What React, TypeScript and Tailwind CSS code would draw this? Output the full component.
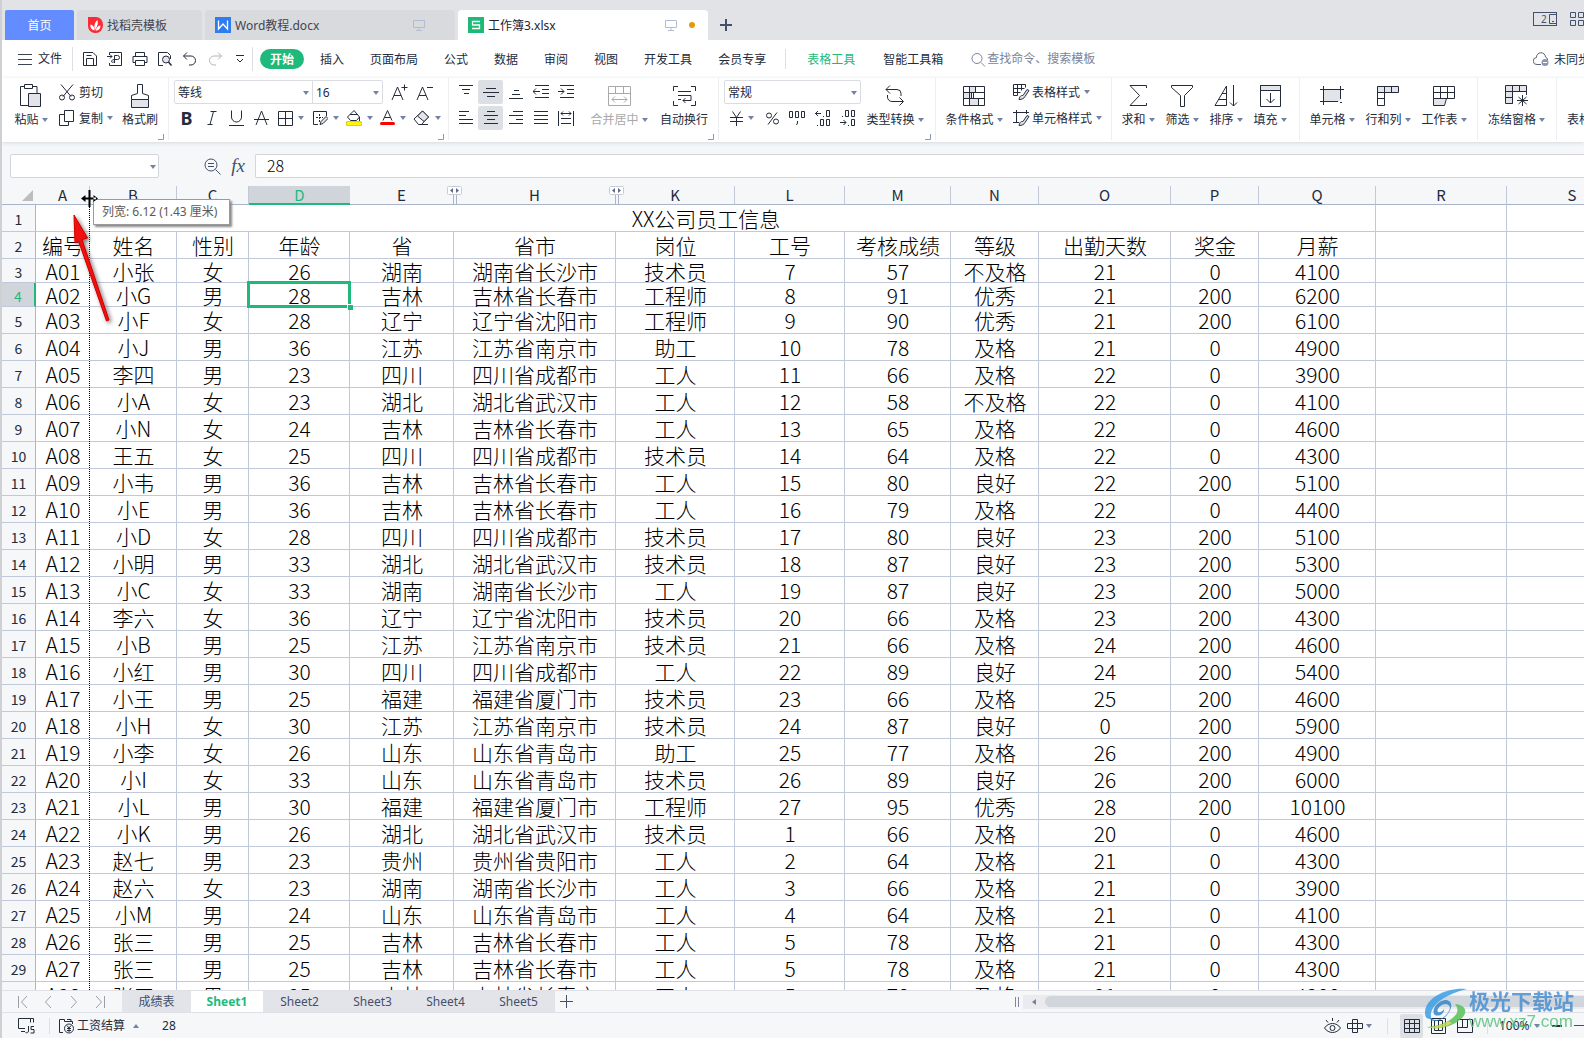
import type { ReactNode } from 'react'

type IconProps = { w: number; h: number; className?: string; children: ReactNode }

function Icon({ w, h, className = '', children }: IconProps) {
  return (
    <svg
      width={w}
      height={h}
      viewBox={`0 0 ${w} ${h}`}
      fill="none"
      stroke="currentColor"
      className={`shrink-0 ${className}`}
      aria-hidden="true"
    >
      {children}
    </svg>
  )
}

function Caret({ className = '' }: { className?: string }) {
  return (
    <svg width="6" height="4" viewBox="0 0 6 4" className={`shrink-0 ${className}`} aria-hidden="true">
      <path d="M0 0h6L3 4z" fill="#7483a3" />
    </svg>
  )
}

function Group({ className, corner, children }: { className: string; corner?: boolean; children: ReactNode }) {
  return (
    <div className={`relative flex h-[62px] shrink-0 border-r border-[#eceef1] ${className}`}>
      {children}
      {corner && (
        <Icon w={6} h={6} className="absolute right-1 bottom-0 text-[#8b97b3]">
          <path d="M5.5 0v5.5H0" />
        </Icon>
      )}
    </div>
  )
}

type BigProps = { label: string; icon: ReactNode; className: string; caret?: boolean; muted?: boolean }

function BigButton({ label, icon, className, caret = true, muted }: BigProps) {
  return (
    <button className={`flex shrink-0 flex-col items-center pt-[5px] ${muted ? 'text-[#a9a9a9]' : ''} ${className}`}>
      <span className="flex h-[25px] items-center">{icon}</span>
      <span className="mt-1 flex h-4 items-center gap-[3px] whitespace-nowrap">
        {label}
        {caret && <Caret />}
      </span>
    </button>
  )
}

function Tool({ label, className = 'w-[25px]', active, caret, children }: {
  label: string
  className?: string
  active?: boolean
  caret?: boolean
  children: ReactNode
}) {
  return (
    <button
      aria-label={label}
      className={`flex h-6 shrink-0 items-center justify-center gap-[5px] rounded-xs ${active ? 'bg-[#dce0e5]' : ''} ${className}`}
    >
      {children}
      {caret && <Caret />}
    </button>
  )
}

function Monitor() {
  return (
    <Icon w={12} h={12} className="text-[#b4bcd4]">
      <path d="M.5 1.5h11v7H.5zM6 8.500v3M3 11.500h6" />
    </Icon>
  )
}

function Divider({ className = '' }: { className?: string }) {
  return <span className={`w-px shrink-0 bg-[#dcdfe4] ${className}`} />
}

function TitleBar() {
  return (
    <header className="flex h-10 shrink-0 items-end bg-[#e1e3e7] pl-[3px]">
      <button className="h-[30px] w-[69px] shrink-0 rounded-t-xs bg-[#628cff] pt-[2px] text-white">首页</button>
      <button className="ml-[3px] flex h-[30px] w-[125px] shrink-0 items-center rounded-t-sm bg-[#d9dade] pl-[11px] text-[#41454f]">
        <svg width="15" height="16" viewBox="0 0 15 16" className="mr-1" aria-hidden="true">
          <path d="M0 0h8a7 8 0 0 1 0 16h-1A7 7 0 0 1 0 9z" fill="#fb2a35" />
          <path
            d="M6.500 13.500C3 12.500 2 10 2.500 7.500c2 .5 3 1.500 3.500 3zM7 13c-1.500-4 0-8 2.500-10 1 3 0 6-2.500 10zM7.500 13.500c1-3 2.500-5 5-5 0 3-1.500 5-5 5z"
            fill="#fff"
          />
        </svg>
        <span className="pt-[2px]">找稻壳模板</span>
      </button>
      <button className="ml-[3px] flex h-[30px] w-[250px] shrink-0 items-center rounded-t-sm bg-[#d9dade] pl-[10px] text-[#41454f]">
        <svg width="16" height="16" viewBox="0 0 16 16" className="mr-1" aria-hidden="true">
          <path d="M0 0h16v16H0z" fill="#2f7cf0" />
          <path d="M3.500 3.500v8.500L8 7l4.500 5V3.500" fill="none" stroke="#fff" strokeWidth="1.300" />
        </svg>
        <span className="pt-[2px]">Word教程.docx</span>
        <span className="mr-[30px] ml-auto">
          <Monitor />
        </span>
      </button>
      <button className="ml-[3px] flex h-[30px] w-[250px] shrink-0 items-center rounded-t-sm bg-white pl-[10px] text-[#1c2330]">
        <svg width="16" height="16" viewBox="0 0 16 16" className="mr-1" aria-hidden="true">
          <path d="M0 0h16v16H0z" fill="#1db977" />
          <path d="M12 4.500H4.500V8h7v3.500H4" fill="none" stroke="#fff" strokeWidth="1.300" />
        </svg>
        <span className="pt-[2px]">工作簿3.xlsx</span>
        <span className="ml-auto">
          <Monitor />
        </span>
        <span className="mr-[13px] ml-3 size-[6px] rounded-full bg-[#e59a0c]" />
      </button>
      <button aria-label="新建标签" className="ml-3 flex h-[30px] items-center text-[#44506b]">
        <Icon w={12} h={12}>
          <path d="M6 0v12M0 6h12" strokeWidth="2" />
        </Icon>
      </button>
      <div className="ml-auto flex h-7 w-[51px] items-start gap-[13px] overflow-hidden text-[#44506b]">
        <span className="flex h-[14px] w-6 shrink-0 items-center justify-between border border-[#44506b] pl-[7px] text-[10px]">
          2
          <Icon w={8} h={12}>
            <path d="M8 1.500H1.500v9H8M4 8.500h2" />
          </Icon>
        </span>
        <Icon w={16} h={14}>
          <path d="M.5.5h5v5h-5zM8.500.5h5v5h-5zM.5 8.500h5v5h-5zM8.500 8.500h5v5h-5z" />
        </Icon>
      </div>
    </header>
  )
}

const menus = ['插入', '页面布局', '公式', '数据', '审阅', '视图', '开发工具', '会员专享']

function MenuBar() {
  return (
    <nav className="flex h-[38px] shrink-0 items-center bg-white pl-4 text-[#242b3a]">
      <button className="flex items-center gap-[6px]">
        <Icon w={14} h={11} className="text-[#3c4454]">
          <path d="M0 .5h14M0 5.500h14M0 10.500h14" />
        </Icon>
        文件
      </button>
      <Divider className="ml-[10px] h-6" />
      <div className="ml-1 flex">
        <Tool label="保存">
          <Icon w={16} h={16}>
            <path d="M1.500 1.500h9.500l3.500 3.500v9.500h-13zM4.500 14.500v-7h7v7M4.500 4.500h5" />
          </Icon>
        </Tool>
        <Tool label="输出为PDF">
          <Icon w={16} h={16}>
            <path d="M2.500 4V1.500h12v13h-12V12M0 5.500h5M3 3.500l2 2-2 2M7.500 12V4.500h3a2 2 0 0 1 0 4h-3M7.500 8.500c-2 0-3 1-3 2s2 1 3 0" />
          </Icon>
        </Tool>
        <Tool label="打印">
          <Icon w={16} h={16}>
            <path d="M3.500 5V1.500h9V5M3.500 11.500h-2.500v-6h14v6h-2.500M3.500 9.500h9v5h-9z" />
          </Icon>
        </Tool>
        <Tool label="打印预览">
          <Icon w={16} h={16}>
            <path d="M6 14.500H1.500v-13h9l3 3V8" />
            <circle cx="9" cy="8.500" r="3.500" fill="#e4e5ea" />
            <path d="M11.500 11l3 3.500" strokeWidth="1.500" />
          </Icon>
        </Tool>
        <Tool label="撤销">
          <Icon w={16} h={16}>
            <path d="M5 1.500l-3.500 3.500L5 8.500M1.500 5H9a4.500 4.500 0 0 1 0 9H7" />
          </Icon>
        </Tool>
        <Tool label="恢复">
          <Icon w={16} h={16} className="text-[#b5b5b5]">
            <path d="M11 1.500l3.500 3.500-3.500 3.500M14.500 5H7a4.500 4.500 0 0 0 0 9h2" />
          </Icon>
        </Tool>
        <Tool label="更多">
          <Icon w={8} h={8}>
            <path d="M0 .5h8M1 4l3 3 3-3" />
          </Icon>
        </Tool>
      </div>
      <Divider className="h-6" />
      <button className="ml-[7px] h-5 w-11 shrink-0 rounded-full bg-[#1fb97c] pt-px font-bold text-white">开始</button>
      <div className="ml-4 flex shrink-0 gap-[26px] pt-[2px]">
        {menus.map((name) => (
          <button key={name}>{name}</button>
        ))}
      </div>
      <Divider className="ml-[19px] h-5" />
      <button className="ml-[21px] shrink-0 pt-[2px] text-[#1fb97c]">表格工具</button>
      <button className="ml-7 shrink-0 pt-[2px]">智能工具箱</button>
      <label className="ml-7 flex flex-1 items-center gap-px text-[#7a849c]">
        <Icon w={15} h={15}>
          <circle cx="6" cy="6.500" r="5" />
          <path d="M10 10.500l4 4" />
        </Icon>
        <input
          aria-label="查找命令"
          placeholder="查找命令、搜索模板"
          className="w-[120px] bg-transparent outline-none placeholder:text-[#7a849c]"
        />
      </label>
      <button className="flex w-[51px] shrink-0 items-center gap-[5px] overflow-hidden whitespace-nowrap">
        <Icon w={16} h={14}>
          <path d="M8 12.500H4a3.500 3.500 0 0 1-.5-7 4.500 4.500 0 0 1 9-.5 3 3 0 0 1 2 3" stroke="#5b6479" />
          <circle cx="12" cy="10.500" r="3.500" fill="#8a96b2" stroke="none" />
          <path d="M10 10.500h4" stroke="#fff" />
        </Icon>
        <span className="pt-[2px]">未同步</span>
      </button>
    </nav>
  )
}

function FormatRow() {
  return (
    <div className="flex">
      <Tool label="加粗">
        <span className="font-['Noto_Sans'] text-[18px] font-bold">B</span>
      </Tool>
      <Tool label="倾斜">
        <Icon w={10} h={16}>
          <path d="M3.500 1.500h6M.5 14.500h5M6.500 1.500l-3.500 13" />
        </Icon>
      </Tool>
      <Tool label="下划线">
        <Icon w={15} h={16}>
          <path d="M2.500.5V7a5 5 0 0 0 10 0V.5M0 15.500h15" />
        </Icon>
      </Tool>
      <Tool label="删除线">
        <Icon w={15} h={16}>
          <path d="M2 15l5.500-14L13 15M0 9.500h15" />
        </Icon>
      </Tool>
      <Tool label="边框" className="w-[34px]" caret>
        <Icon w={15} h={15}>
          <path d="M.5.5h14v14H.5zM7.500.5v14M.5 7.500h14" />
        </Icon>
      </Tool>
      <Tool label="绘图边框" className="w-[34px]" caret>
        <Icon w={16} h={16}>
          <path d="M14.500 6V1.500H1.500v13H6" />
          <path d="M7.500 4v9M4 7.500h7" strokeDasharray="2 1" />
          <path d="M8 14.500l1-3 5-5 2 2-5 5z" fill="#e4e5ea" />
        </Icon>
      </Tool>
      <Tool label="填充颜色" className="w-[34px]" caret>
        <Icon w={16} h={16}>
          <path d="M1.500 7L8 .5 13.500 7 10.500 10.500h-6zM4 4.500h8M13.500 7v4" />
          <path d="M1.500 13.500h13" stroke="#8d8d20" strokeWidth="4" strokeLinecap="round" />
          <path d="M1.500 13.500h13" stroke="#fff600" strokeWidth="3" strokeLinecap="round" />
        </Icon>
      </Tool>
      <Tool label="字体颜色" className="w-[34px]" caret>
        <Icon w={15} h={16}>
          <path d="M3 10.500L7.500.5l4.500 10M4.500 7.500h6" />
          <path d="M1.500 13.500h12" stroke="#f00" strokeWidth="3" strokeLinecap="round" />
        </Icon>
      </Tool>
      <Tool label="清除" className="w-[34px]" caret>
        <Icon w={17} h={16}>
          <path d="M1 9l8.500-8 6 6-7 7.500H5.500zM7 14.500h8" />
          <path d="M4.500 6l5-5 6 6-4.500 4.500z" fill="#e4e5ea" />
        </Icon>
      </Tool>
    </div>
  )
}

function SelectBox({ label, value, className }: { label: string; value: string; className: string }) {
  return (
    <div className={`relative h-6 border border-[#d9dce1] bg-white ${className}`}>
      <select aria-label={label} className="h-full w-full appearance-none bg-transparent pt-px pl-[3px] outline-none">
        <option>{value}</option>
      </select>
      <Caret className="pointer-events-none absolute top-[10px] right-[3px]" />
    </div>
  )
}

function Ribbon() {
  return (
    <div className="relative z-10 flex h-16 shrink-0 overflow-hidden bg-white text-[#242b3a] shadow-[0_1px_4px_#d5d7db]">
      <Group className="w-[167px] pl-1" corner>
        <BigButton
          label="粘贴"
          className="w-[50px]"
          icon={
            <Icon w={22} h={24}>
              <path d="M8 21.500H.5v-19h4M13 2.500h4V9M4.500.5h8v4h-8z" />
              <path d="M8.500 9.500h12v13h-12z" fill="#e2e4e9" />
            </Icon>
          }
        />
        <div className="ml-[3px] flex w-[60px] flex-col gap-[2px] pt-[2px]">
          <button className="flex h-6 items-center gap-1">
            <Icon w={16} h={17}>
              <path d="M2 .5l10 12M14 .5l-10 12" />
              <circle cx="3" cy="13.500" r="2.500" />
              <circle cx="13" cy="13.500" r="2.500" />
            </Icon>
            <span className="pt-[2px]">剪切</span>
          </button>
          <button className="flex h-6 items-center gap-1">
            <Icon w={16} h={16}>
              <path d="M5.500 4.500h-5v11h9v-4M5.500.5h9v11h-9z" />
            </Icon>
            <span className="pt-[2px]">复制</span>
            <Caret />
          </button>
        </div>
        <BigButton
          label="格式刷"
          className="w-[42px]"
          caret={false}
          icon={
            <Icon w={18} h={24}>
              <path d="M.5 23.500v-8h17v8z" fill="#e2e4e9" />
              <path d="M.5 15.500v-4l6-2v-9h5v9l6 2v4" />
            </Icon>
          }
        />
      </Group>

      <Group className="w-[280px] pl-[5px]" corner>
        <div className="flex flex-col gap-[2px] pt-[2px]">
          <div className="flex">
            <SelectBox label="字体" value="等线" className="w-[139px] rounded-l-xs" />
            <SelectBox label="字号" value="16" className="-ml-px w-[71px] rounded-r-xs" />
            <Tool label="增大字号" className="ml-1 w-[25px]">
              <Icon w={17} h={17}>
                <path d="M1 16L6.500 3 12 16M3 11.500h7M13.500.5v6M10.500 3.500h6" />
              </Icon>
            </Tool>
            <Tool label="减小字号">
              <Icon w={17} h={17}>
                <path d="M1 16L6.500 3 12 16M3 11.500h7M11 3.500h6" />
              </Icon>
            </Tool>
          </div>
          <FormatRow />
        </div>
      </Group>

      <Group className="w-[270px] pl-1" corner>
        <div className="flex flex-col gap-[2px] pt-[2px]">
          <div className="flex">
            <Tool label="顶端对齐">
              <Icon w={14} h={16}><path d="M0 1.500h14M3 5.500h8M5 9.500h5" /></Icon>
            </Tool>
            <Tool label="垂直居中" active>
              <Icon w={16} h={14}><path d="M3 3.500h10M0 7.500h16M4 11.500h8" /></Icon>
            </Tool>
            <Tool label="底端对齐">
              <Icon w={14} h={16}><path d="M5 6.500h5M3 10.500h8M0 14.500h14" /></Icon>
            </Tool>
            <Tool label="减少缩进">
              <Icon w={16} h={14}><path d="M2 .5h14M9 4.500h7M9 8.500h7M2 12.500h14M0 6.500h7M3 3.500l-3 3 3 3" /></Icon>
            </Tool>
            <Tool label="增加缩进">
              <Icon w={16} h={14}><path d="M2 .5h14M9 4.500h7M9 8.500h7M2 12.500h14M0 6.500h6M3 3.500l3 3-3 3" /></Icon>
            </Tool>
          </div>
          <div className="flex">
            <Tool label="左对齐">
              <Icon w={14} h={14}><path d="M0 .5h10M0 4.500h7M0 8.500h14M0 12.500h14" /></Icon>
            </Tool>
            <Tool label="水平居中" active>
              <Icon w={14} h={14}><path d="M3 .5h8M0 4.500h14M3 8.500h8M0 12.500h14" /></Icon>
            </Tool>
            <Tool label="右对齐">
              <Icon w={14} h={14}><path d="M4 .5h10M0 4.500h14M7 8.500h7M0 12.500h14" /></Icon>
            </Tool>
            <Tool label="两端对齐">
              <Icon w={14} h={14}><path d="M0 .5h14M0 4.500h14M0 8.500h14M0 12.500h14" /></Icon>
            </Tool>
            <Tool label="分散对齐">
              <Icon w={16} h={15}><path d="M.5 0v15M15.500 0v15M3 2.500h10M5 .5l-2 2 2 2M11 .5l2 2-2 2M3 7.500h10M3 12.500h10" /></Icon>
            </Tool>
          </div>
        </div>
        <BigButton
          label="合并居中"
          className="ml-2 w-[66px]"
          muted
          icon={
            <Icon w={23} h={20}>
              <path d="M.5.5h22v19H.5zM.5 7.500h22M7.500.5v7M15.500.5v7M4 13.500h15M7 10.500l-3 3 3 3M16 10.500l3 3-3 3" />
            </Icon>
          }
        />
        <BigButton
          label="自动换行"
          className="w-16"
          caret={false}
          icon={
            <Icon w={23} h={20}>
              <path d="M.5 5V.5H5M18 .5h4.500V5M.5 15v4.500H5M18 19.500h4.500V15M5 5.500h13M5 9.500h13v5h-8M5 13.500h3M12.500 12l-2.500 2.500 2.500 2.500" />
            </Icon>
          }
        />
      </Group>

      <Group className="w-[217px] pl-[5px]" corner>
        <div className="flex flex-col gap-[2px] pt-[2px]">
          <SelectBox label="数字格式" value="常规" className="w-[137px] rounded-xs" />
          <div className="flex">
            <Tool label="货币" className="w-9" caret>
              <Icon w={13} h={15}><path d="M2.500.5l4 6 4-6M6.500 6.500V15M0 6.500h13M0 10.500h13" /></Icon>
            </Tool>
            <Tool label="百分比">
              <Icon w={13} h={13}>
                <path d="M11 .5l-9 12" />
                <circle cx="3" cy="3.500" r="2.500" />
                <circle cx="10" cy="9.500" r="2.500" />
              </Icon>
            </Tool>
            <Tool label="千位分隔">
              <Icon w={17} h={15}>
                <path d="M.5.5h3v6h-3zM6.500.5h3v6h-3zM12.500.5h3v6h-3zM8.500 10v2l-1 2" />
              </Icon>
            </Tool>
            <Tool label="增加小数位">
              <Icon w={16} h={16}>
                <path d="M0 3.500h6M3 1L.5 3.500 3 6M8 6.500h1M11.500.5h3v6h-3zM2 15.500h1M5.500 9.500h3v6h-3zM11.500 9.500h3v6h-3z" />
              </Icon>
            </Tool>
            <Tool label="减少小数位">
              <Icon w={16} h={16}>
                <path d="M2 6.500h1M5.500.5h3v6h-3zM11.500.5h3v6h-3zM0 12.500h6M3.500 10L6 12.500 3.500 15M8 15.500h1M11.500 9.500h3v6h-3z" />
              </Icon>
            </Tool>
          </div>
        </div>
        <BigButton
          label="类型转换"
          className="w-[68px]"
          icon={
            <Icon w={20} h={21}>
              <path d="M5 .5l-4 4 4 4M1 4.500h11a4 4 0 0 1 4 4V11M2.500 10v2a4.500 4.500 0 0 0 4.500 4.500h11M14.500 12.500l4 4-4 4" />
            </Icon>
          }
        />
      </Group>

      <Group className="w-[176px] pl-1">
        <BigButton
          label="条件格式"
          className="w-[68px]"
          icon={
            <Icon w={22} h={20}>
              <path d="M6.500.5h6v6h-6zM.5 6.500h8v6h-8zM6.500 12.500h9v7h-9z" fill="#e2e4e9" />
              <path d="M.5.5h21v19H.5zM.5 6.500h21M.5 12.500h21M6.500.5v19M12.500.5v6M10.500 6.500v6M15.500 12.500v7" />
            </Icon>
          }
        />
        <div className="ml-[5px] flex flex-col gap-[2px] pt-[2px]">
          <button className="flex h-6 items-center gap-[2px] whitespace-nowrap">
            <Icon w={17} h={16}>
              <path d="M.5.5h12v3M.5.5v11h4M4.500.5v11M8.500.5v6M.5 4.500h11M.5 8.500h7" />
              <path d="M6 15.500c1-4 2-4 4-4l4-6 2 1-4 6c-1 2-3 3-6 3z" fill="#e2e4e9" />
            </Icon>
            <span className="pt-[2px]">表格样式</span>
            <Caret className="ml-[2px]" />
          </button>
          <button className="flex h-6 items-center gap-[2px] whitespace-nowrap">
            <Icon w={17} h={16}>
              <path d="M3.500 0v12.500H6M0 2.500h16M13.500 0v4M0 12.500h5" />
              <path d="M6 15.500c1-4 2-4 4-4l4-6 2 1-4 6c-1 2-3 3-6 3z" fill="#e2e4e9" />
            </Icon>
            <span className="pt-[2px]">单元格样式</span>
            <Caret className="ml-[2px]" />
          </button>
        </div>
      </Group>

      <Group className="w-[188px] pl-1">
        <BigButton
          label="求和"
          className="w-11"
          icon={
            <Icon w={18} h={21}>
              <path d="M17.500 3V.5H1l9.500 10L1 20.500h16.500V18" />
            </Icon>
          }
        />
        <BigButton
          label="筛选"
          className="w-11"
          icon={
            <Icon w={22} h={22}>
              <path d="M.5.5h21v2l-8 8v11h-4v-11l-9-8z" />
            </Icon>
          }
        />
        <BigButton
          label="排序"
          className="w-11"
          icon={
            <Icon w={24} h={22}>
              <path d="M1 20.500L12.500 1v19.500zM8 8.500h4.500M4.500 14.500h8M19.500 0v21M16 17.500l3.500 3.500 3.500-3.500" />
            </Icon>
          }
        />
        <BigButton
          label="填充"
          className="w-11"
          icon={
            <Icon w={21} h={22}>
              <path d="M.5.5h20v5H.5z" fill="#e2e4e9" />
              <path d="M.5.5h20v21H.5zM10.500 8v10M6.500 14l4 4 4-4" />
            </Icon>
          }
        />
      </Group>

      <Group className="w-[178px] pl-1">
        <BigButton
          label="单元格"
          className="w-14"
          icon={
            <Icon w={24} h={20}>
              <path d="M3.500 3.500h17v12h-17z" fill="#e2e4e9" stroke="none" />
              <path d="M3.500 0v19M20.500 0v13M0 3.500h24M0 15.500h18M20 16.500h2" />
            </Icon>
          }
        />
        <BigButton
          label="行和列"
          className="w-14"
          icon={
            <Icon w={22} h={20}>
              <path d="M.5.5h21v6H.5z" fill="#e2e4e9" />
              <path d="M.5.5v19h7V.5M14.500.5v6M.5 12.500h7" />
            </Icon>
          }
        />
        <BigButton
          label="工作表"
          className="w-14"
          icon={
            <Icon w={22} h={20}>
              <path d="M.5 12.500h13l-2 7H.5z" fill="#e2e4e9" />
              <path d="M.5.5h21v12H.5zM.5 6.500h21M7.500.5v12M14.500.5v12" />
            </Icon>
          }
        />
      </Group>

      <Group className="w-[79px]">
        <BigButton
          label="冻结窗格"
          className="w-[77px]"
          icon={
            <Icon w={23} h={21}>
              <path d="M.5.5h21v6h-14v12h-7z" fill="#e2e4e9" />
              <path d="M21.500 6.500V10M7.500.5v18M14.500.5v6M.5 6.500h21M.5 12.500h7M17.500 10v11M12 15.500h11M13.500 12l8 7M21.500 12l-8 7" />
            </Icon>
          }
        />
      </Group>
      <BigButton label="表格工具" className="ml-[10px]" caret={false} icon={null} />
    </div>
  )
}

function FormulaBar() {
  return (
    <div className="flex h-11 shrink-0 items-center overflow-hidden bg-[#f5f7f9] pt-1 pl-2 text-[#44506b]">
      <div className="relative h-6 w-[149px] shrink-0 rounded-xs border border-[#d3d6db] bg-white">
        <input aria-label="名称框" className="h-full w-[130px] bg-transparent px-1 outline-none" />
        <Caret className="absolute top-[10px] right-[2px]" />
      </div>
      <button aria-label="查看" className="ml-[45px]">
        <Icon w={17} h={17}>
          <circle cx="7" cy="7" r="6" />
          <path d="M11.500 11.500l5 5M4 5.500h6M4 8.500h6" />
        </Icon>
      </button>
      <button
        aria-label="插入函数"
        className="ml-[9px] w-4 font-['Liberation_Serif',serif] text-[19px] leading-5 italic"
      >
        fx
      </button>
      <input
        aria-label="编辑栏"
        defaultValue="28"
        className="ml-[9px] h-6 flex-1 rounded-l-xs border border-r-0 border-[#d3d6db] bg-white pb-[2px] pl-[11px] font-['Noto_Sans_CJK_SC',sans-serif] text-[16px] leading-5 font-light text-black outline-none"
      />
    </div>
  )
}

const columns = [
  { name: 'A', width: 'w-[54px]' },
  { name: 'B', width: 'w-[87px]' },
  { name: 'C', width: 'w-[72px]' },
  { name: 'D', width: 'w-[101px]' },
  { name: 'E', width: 'w-[104px]', hiddenAfter: true },
  { name: 'H', width: 'w-[162px]', hiddenAfter: true },
  { name: 'K', width: 'w-[119px]' },
  { name: 'L', width: 'w-[110px]' },
  { name: 'M', width: 'w-[106px]' },
  { name: 'N', width: 'w-[88px]' },
  { name: 'O', width: 'w-[132px]' },
  { name: 'P', width: 'w-[88px]' },
  { name: 'Q', width: 'w-[117px]' },
  { name: 'R', width: 'w-[131px]' },
  { name: 'S', width: 'w-[131px]' },
]

const rows = `
编号 姓名 性别 年龄 省 省市 岗位 工号 考核成绩 等级 出勤天数 奖金 月薪
A01 小张 女 26 湖南 湖南省长沙市 技术员 7 57 不及格 21 0 4100
A02 小G 男 28 吉林 吉林省长春市 工程师 8 91 优秀 21 200 6200
A03 小F 女 28 辽宁 辽宁省沈阳市 工程师 9 90 优秀 21 200 6100
A04 小J 男 36 江苏 江苏省南京市 助工 10 78 及格 21 0 4900
A05 李四 男 23 四川 四川省成都市 工人 11 66 及格 22 0 3900
A06 小A 女 23 湖北 湖北省武汉市 工人 12 58 不及格 22 0 4100
A07 小N 女 24 吉林 吉林省长春市 工人 13 65 及格 22 0 4600
A08 王五 女 25 四川 四川省成都市 技术员 14 64 及格 22 0 4300
A09 小韦 男 36 吉林 吉林省长春市 工人 15 80 良好 22 200 5100
A10 小E 男 36 吉林 吉林省长春市 工人 16 79 及格 22 0 4400
A11 小D 女 28 四川 四川省成都市 技术员 17 80 良好 23 200 5100
A12 小明 男 33 湖北 湖北省武汉市 技术员 18 87 良好 23 200 5300
A13 小C 女 33 湖南 湖南省长沙市 工人 19 87 良好 23 200 5000
A14 李六 女 36 辽宁 辽宁省沈阳市 技术员 20 66 及格 23 200 4300
A15 小B 男 25 江苏 江苏省南京市 技术员 21 66 及格 24 200 4600
A16 小红 男 30 四川 四川省成都市 工人 22 89 良好 24 200 5400
A17 小王 男 25 福建 福建省厦门市 技术员 23 66 及格 25 200 4600
A18 小H 女 30 江苏 江苏省南京市 技术员 24 87 良好 0 200 5900
A19 小李 女 26 山东 山东省青岛市 助工 25 77 及格 26 200 4900
A20 小I 女 33 山东 山东省青岛市 技术员 26 89 良好 26 200 6000
A21 小L 男 30 福建 福建省厦门市 工程师 27 95 优秀 28 200 10100
A22 小K 男 26 湖北 湖北省武汉市 技术员 1 66 及格 20 0 4600
A23 赵七 男 23 贵州 贵州省贵阳市 工人 2 64 及格 21 0 4300
A24 赵六 女 23 湖南 湖南省长沙市 工人 3 66 及格 21 0 3900
A25 小M 男 24 山东 山东省青岛市 工人 4 64 及格 21 0 4100
A26 张三 男 25 吉林 吉林省长春市 工人 5 78 及格 21 0 4300
A27 张三 男 25 吉林 吉林省长春市 工人 5 78 及格 21 0 4300
A28 张三 男 25 吉林 吉林省长春市 工人 5 78 及格 21 0 4300`
  .trim()
  .split('\n')
  .map((line) => line.split(' '))

const cell = 'relative border-r border-b border-[#c0c8da] p-0 pl-px whitespace-nowrap'

function RowHeader({ n }: { n: number }) {
  const selected = n === 4
  return (
    <th
      className={`border-b border-[#c0c8da] p-0 pt-[2px] text-[14px] leading-5 font-normal ${
        selected ? 'border-r-2 border-r-[#1fb97c] bg-[#d0d4db] text-[#1fb97c]' : 'border-r border-r-[#a9b4cd] bg-[#f5f7f9] text-[#242b3a]'
      }`}
    >
      {n}
    </th>
  )
}

function Sheet() {
  return (
    <main className="relative min-h-0 flex-1 overflow-hidden bg-white">
      <table className="w-[1636px] table-fixed border-separate border-spacing-0 text-center font-['Noto_Sans_CJK_SC',sans-serif]">
        <colgroup>
          <col className="w-[34px]" />
          {columns.map((c) => (
            <col key={c.name} className={c.width} />
          ))}
        </colgroup>
        <thead>
          <tr className="h-[19px] bg-[#f5f7f9] text-[15px] leading-[17px] text-[#242b3a]">
            <th aria-label="全选" className="border-b border-[#a9b4cd] p-0">
              <svg width="11" height="11" viewBox="0 0 11 11" className="ml-auto mr-[3px]" aria-hidden="true">
                <path d="M11 0v11H0z" fill="#bdbdbd" />
              </svg>
            </th>
            {columns.map((c) => (
              <th
                key={c.name}
                className={`relative p-0 align-top font-normal ${
                  c.name === 'D'
                    ? 'border-b-2 border-[#1fb97c] bg-[#d0d4db] text-[#1fb97c]'
                    : 'border-r border-b border-[#a9b4cd] border-r-[#c0c8da]'
                }`}
              >
                <span className="block h-4">{c.name}</span>
                {c.hiddenAfter && (
                  <svg width="15" height="19" viewBox="0 0 15 19" className="absolute top-0 -right-[9px] z-10" aria-hidden="true">
                    <path d="M6.500 8v11M9.500 8v11" stroke="#a9b4cd" />
                    <rect x=".5" y=".5" width="14" height="8" rx="1" fill="#fff" stroke="#c9ccd2" />
                    <path d="M6 2v5L3 4.500zM9 2v5l3-2.500z" fill="#5f6b87" />
                  </svg>
                )}
              </th>
            ))}
          </tr>
        </thead>
        <tbody className="text-[21px] font-light text-black">
          <tr className="h-[27px]">
            <RowHeader n={1} />
            <td colSpan={13} className={cell}>
              <div className="h-[26px] pt-px leading-6">XX公司员工信息</div>
            </td>
            <td className={cell} />
            <td className={cell} />
          </tr>
          {rows.map((row, i) => {
            const n = i + 2
            const short = n === 3 || n === 4
            return (
              <tr key={n} className={short ? 'h-6' : 'h-[27px]'}>
                <RowHeader n={n} />
                {row.map((text, j) => (
                  <td key={j} className={cell}>
                    <div className={short ? 'h-[23px] leading-6' : 'h-[26px] pt-px leading-6'}>{text}</div>
                    {n === 4 && j === 3 && (
                      <div className="absolute -inset-[2px] z-10 border-3 border-[#1fb97c]">
                        <span className="absolute -right-[5px] -bottom-[5px] size-[6px] border-t border-l border-white bg-[#1fb97c]" />
                      </div>
                    )}
                  </td>
                ))}
                <td className={cell} />
                <td className={cell} />
              </tr>
            )
          })}
        </tbody>
      </table>

      {/* column resize guide, cursor and its tooltip */}
      <div className="absolute top-[19px] bottom-0 left-[87px] border-l border-dotted border-black bg-white" />
      <div className="absolute top-[13px] left-[91px] z-10 border border-[#9a9a9a] bg-white py-[3px] pr-3 pl-2 leading-[18px] whitespace-nowrap text-[#5a5a5a] shadow-[2px_2px_2px_#8a8a8a]">
        列宽: 6.12 (1.43 厘米)
      </div>
      <svg width="17" height="17" viewBox="0 0 17 17" className="absolute top-1 left-[79px] z-10" aria-hidden="true">
        <path d="M7.500 0h2v17h-2zM0 8.500L4.500 5v7zM17 8.500L12.500 5v7zM2 7.500h13v2H2z" fill="#000" />
      </svg>
      <svg
        width="42"
        height="116"
        viewBox="0 0 42 116"
        className="absolute top-[27px] left-[69px] drop-shadow-[2px_2px_2px_#777]"
        aria-hidden="true"
      >
        <path d="M3 2l13.500 23-5.500 1.500L38 107l-2.500 1L7.500 28 4 30z" fill="#f01010" stroke="#d00000" strokeLinejoin="round" />
      </svg>
    </main>
  )
}

function SheetTabs() {
  return (
    <div className="flex h-[23px] shrink-0 items-stretch border-t border-b border-[#dfe1e6] bg-[#f5f7f9] text-[#44506b]">
      <div className="flex w-[120px] shrink-0 items-center pl-4 text-[#9b9fa8]">
        <button aria-label="第一个" className="w-[26px]">
          <Icon w={10} h={12}><path d="M.5 0v12M9 0L3.500 6 9 12" /></Icon>
        </button>
        <button aria-label="上一个" className="w-[26px]">
          <Icon w={8} h={12}><path d="M7 0L1.500 6 7 12" /></Icon>
        </button>
        <button aria-label="下一个" className="w-[25px]">
          <Icon w={8} h={12}><path d="M1 0l5.500 6L1 12" /></Icon>
        </button>
        <button aria-label="最后一个">
          <Icon w={10} h={12}><path d="M9.500 0v12M1 0l5.500 6L1 12" /></Icon>
        </button>
      </div>
      <button className="w-[69px] shrink-0 bg-[#e3e4ea]">成绩表</button>
      <button className="w-[72px] shrink-0 bg-white font-bold text-[#1fb97c]">Sheet1</button>
      {['Sheet2', 'Sheet3', 'Sheet4', 'Sheet5'].map((name) => (
        <button key={name} className="w-[73px] shrink-0 bg-[#e3e4ea]">
          {name}
        </button>
      ))}
      <button aria-label="新建工作表" className="ml-[5px] flex items-center">
        <Icon w={13} h={13}><path d="M6.500 0v13M0 6.500h13" /></Icon>
      </button>
      <div className="ml-auto flex w-[569px] shrink-0 items-center">
        <Icon w={4} h={10} className="text-[#7c869c]"><path d="M.5 0v10M3.500 0v10" /></Icon>
        <div className="ml-1 flex h-[14px] flex-1 items-center bg-[#e9ebef]">
          <button aria-label="向左滚动" className="flex w-[22px] justify-center">
            <svg width="4" height="6" viewBox="0 0 4 6" aria-hidden="true">
              <path d="M4 0v6L0 3z" fill="#7483a3" />
            </svg>
          </button>
          <div className="h-[11px] flex-1 rounded-l-full bg-[#d1d5dc]" />
        </div>
      </div>
    </div>
  )
}

function StatusBar() {
  return (
    <footer className="flex h-[25px] shrink-0 items-center bg-[#f5f7f9] pl-4 text-[#242b3a]">
      <button aria-label="JS宏">
        <Icon w={17} h={16}>
          <path d="M7 10.500H.5v-10h12M3 13.500h4M12.500.5v4M15.500.5v4M12.500.5h3" />
          <path d="M10.500 8v5c0 2-2 2-3 1.500M16 8.500h-3v3h3v3.500h-3.500" />
        </Icon>
      </button>
      <Divider className="ml-[14px] h-4" />
      <button className="ml-[9px] flex items-center gap-[2px]">
        <Icon w={16} h={16}>
          <path d="M4 14.500H.5v-13h5v2h8V6M8 1.500h4v2" />
          <circle cx="10" cy="10.500" r="4.500" />
          <path d="M8 7.500l2 2.500 2-2.500M10 10v4M8 10.500h4M8 12.500h4" />
        </Icon>
        工资结算
        <Caret className="ml-[6px] rotate-180" />
      </button>
      <span className="ml-[23px]">28</span>

      <div className="ml-auto flex w-[260px] shrink-0 items-center overflow-hidden">
        <button aria-label="护眼模式">
          <Icon w={17} h={16}>
            <path d="M.5 10c4-6 12-6 16 0-4 6-12 6-16 0zM8.500 0v3M2 2l2 2.500M15 2l-2 2.500" />
            <circle cx="8.500" cy="10" r="2.500" />
          </Icon>
        </button>
        <button aria-label="阅读模式" className="ml-[6px] flex items-center gap-[3px]">
          <Icon w={16} h={14}>
            <path d="M5.500.5h5v4h5v5h-5v4h-5v-4h-5v-5h5zM5.500 4.500h5v5h-5z" />
          </Icon>
          <Caret />
        </button>
        <Divider className="ml-[15px] h-4" />
        <button aria-label="普通视图" className="ml-[12px] flex h-6 w-[23px] shrink-0 items-center justify-center rounded-xs bg-[#dce0e5]">
          <Icon w={16} h={14}>
            <path d="M.5.5h15v13H.5zM.5 4.500h15M.5 9.500h15M5.500.5v13M10.500.5v13" />
          </Icon>
        </button>
        <button aria-label="分页预览" className="ml-[8px]">
          <Icon w={15} h={16}>
            <path d="M.5.5h14v15H.5zM3.500 2.500h8v10h-8zM7.500 2.500v10" />
          </Icon>
        </button>
        <button aria-label="页面布局" className="ml-[11px]">
          <Icon w={16} h={14}>
            <path d="M.5.5h15v13H.5zM5.500.5v8h5v-8M.5 8.500h5" />
          </Icon>
        </button>
        <Divider className="ml-[14px] h-4" />
        <button className="ml-[11px] flex items-center gap-1">
          100%
          <Caret />
        </button>
        <button aria-label="缩小" className="ml-3">
          <Icon w={10} h={2}><path d="M0 1h10" strokeWidth="2" /></Icon>
        </button>
        <span className="ml-3 h-px w-10 shrink-0 bg-[#44506b]" />
      </div>
    </footer>
  )
}

function Watermark() {
  return (
    <div className="pointer-events-none absolute right-[10px] bottom-2 z-20 flex items-end opacity-85">
      <svg width="44" height="42" viewBox="0 0 44 42" className="mr-px" aria-hidden="true">
        <path d="M43 1C24-1 1 9 1 25c0 5 3 7 6 5C5 17 22 6 43 1z" fill="#3ba0e6" />
        <path d="M5 28c4 6 12 5 18-2 4-5 4-9-1-10-5 0-10 5-8 8 2 1 5-1 6-3 1 4-5 8-9 6-4-3 0-13 10-15 8 0 8 8 2 15-7 8-18 8-18 1z" fill="#3487cf" />
        <path d="M31 16c9 1 14 6 7 14C31 37 16 43 3 39c14-1 26-7 30-14 1-4 0-6-2-9z" fill="#5cbf5a" />
        <path d="M3 39c7 0 15-2 21-6l4 2c-8 5-17 7-25 4z" fill="#c5d64b" />
      </svg>
      <div>
        <div className="text-[21px] leading-6 font-bold text-[#4a8fd0]">极光下载站</div>
        <div className="font-['Liberation_Sans',sans-serif] text-[17px] leading-[17px] text-[#5cc07e]">www.xz7.com</div>
      </div>
    </div>
  )
}

export default function App() {
  return (
    <div className="relative flex h-screen flex-col overflow-hidden border-l-2 border-[#cfd0d3] bg-white font-['Noto_Sans','Noto_Sans_CJK_SC',sans-serif] text-[12px] leading-4">
      <TitleBar />
      <MenuBar />
      <Ribbon />
      <FormulaBar />
      <Sheet />
      <SheetTabs />
      <StatusBar />
      <Watermark />
    </div>
  )
}
